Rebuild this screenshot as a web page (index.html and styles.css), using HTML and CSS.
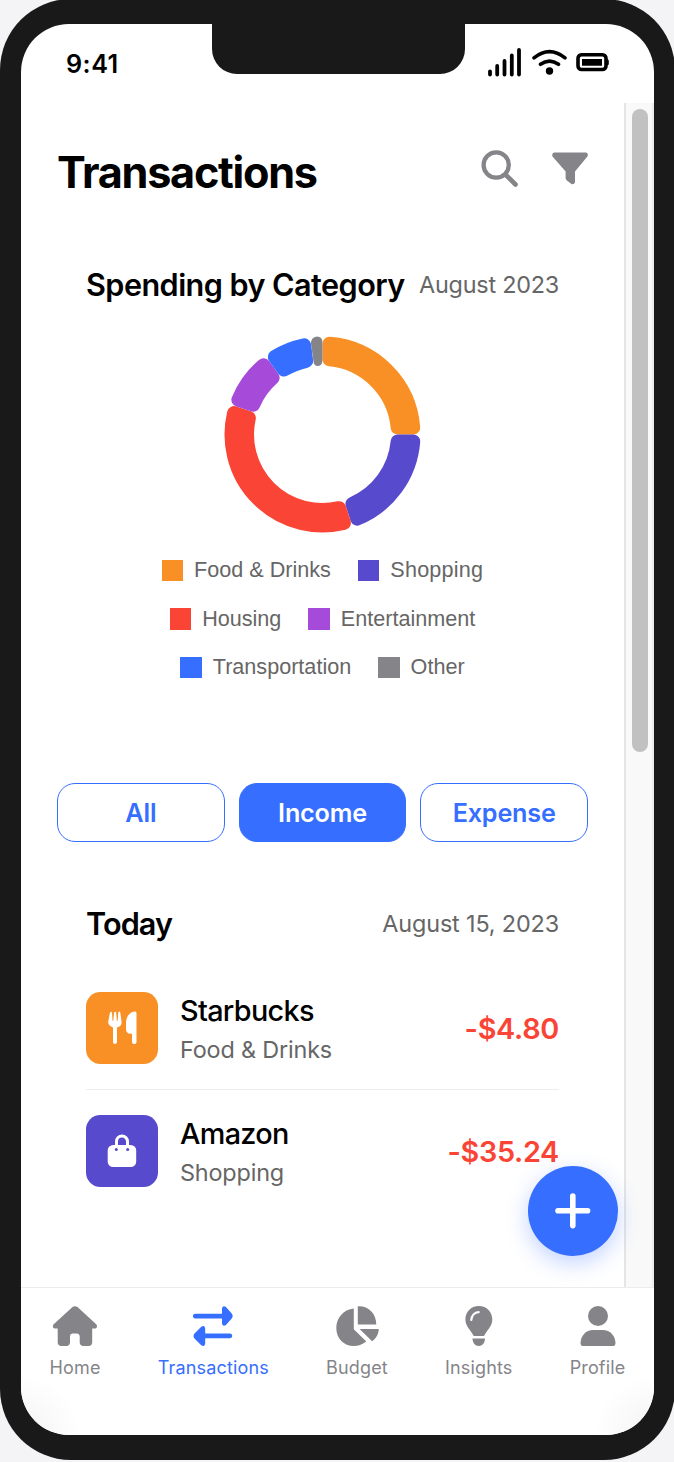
FILE: index.html
```html
<!DOCTYPE html>
<html lang="en">
<head>
<meta charset="utf-8">
<title>Transactions</title>
<link rel="stylesheet" href="styles.css">
</head>
<body>
<div class="phone">
  <div class="notch"></div>
  <div class="screen">
    <header class="status">
      <span class="clock">9:41</span>
      <svg class="status-icons" viewBox="486 46 126 34" fill="none" stroke="#000" stroke-linecap="round">
        <path d="M490 71.300v3.200M497.200 66v8.500M504.500 61v13.500M511.800 55.500v19M519 50v24.500" stroke-width="3.800"/>
        <path d="M534 57.800Q549.500 45.500 565 57.800M540.500 64.300Q549.500 58 558.500 64.300" stroke-width="3.600"/>
        <circle cx="549.500" cy="71" r="3.700" fill="#000" stroke="none"/>
        <rect x="578" y="54.700" width="28" height="14.800" rx="3.500" stroke-width="3.600"/>
        <path d="M582 59h20v6.800h-20z" fill="#000" stroke="none"/>
        <path d="M607.300 60.700v3" stroke-width="3"/>
      </svg>
    </header>
    <div class="viewport">
      <main class="content">
        <div class="page-head">
          <h1>Transactions</h1>
          <svg class="head-icons" viewBox="480 148 110 40" fill="#858489">
            <circle cx="496.200" cy="165" r="12.600" fill="none" stroke="#858489" stroke-width="4.300"/>
            <path d="M506 175l9.500 9.500" stroke="#858489" stroke-width="4.600" stroke-linecap="round"/>
            <path d="M554 152.500h32q2.600 1 1.600 3.800L575 171.500v11q-1.200 2.600-3.600 1.500l-4.800-3.700q-1-.8-1-2.300v-6.500L552.500 156.500q-1-2.800 1.500-4z"/>
          </svg>
        </div>
        <section class="chart-card">
          <div class="section-head"><h2 class="spending">Spending by Category</h2><span class="month">August 2023</span></div>
          <svg class="donut" viewBox="-98.500 -98.500 197 197" stroke-width="14" stroke-linejoin="round">
            <path fill="#f99026" stroke="#f99026" d="M7-90.730A91 91 0 0 1 90.730-7L75.170-7A75.500 75.500 0 0 0 7-75.170z"/>
            <path fill="#584acd" stroke="#584acd" d="M90.730 7A91 91 0 0 1 34.690 84.130L29.890 69.330A75.500 75.500 0 0 0 75.170 7z"/>
            <path fill="#fa4435" stroke="#fa4435" d="M21.380 88.450A91 91 0 0 1-88.450-21.380L-73.650-16.570A75.500 75.500 0 0 0 16.570 73.650z"/>
            <path fill="#a64ad9" stroke="#a64ad9" d="M-84.130-34.690A91 91 0 0 1-59.010-69.280L-49.860-56.690A75.500 75.500 0 0 0-69.330-29.890z"/>
            <path fill="#366eff" stroke="#366eff" d="M-47.690-77.520A91 91 0 0 1-18.310-89.130L-16.360-73.700A75.500 75.500 0 0 0-38.540-64.930z"/>
            <path fill="#858489" d="M-5.500-98Q0-97.800 0-92V-74Q-.500-68.500-5-68.500Q-8.500-68.700-9-73L-11.500-91Q-11.500-97.500-5.500-98z"/>
          </svg>
          <div class="legend">
            <div><span><i class="orange"></i><b>Food &amp; Drinks</b></span><span><i class="indigo"></i><b class="loose">Shopping</b></span></div>
            <div><span><i class="red"></i><b>Housing</b></span><span><i class="violet"></i><b>Entertainment</b></span></div>
            <div><span><i class="blue"></i><b>Transportation</b></span><span><i class="gray"></i><b>Other</b></span></div>
          </div>
        </section>
        <div class="filters">
          <button>All</button><button class="active">Income</button><button>Expense</button>
        </div>
        <section class="day">
          <div class="section-head"><h2 class="today">Today</h2><span class="date">August 15, 2023</span></div>
          <article class="item">
            <svg class="badge orange" viewBox="0 0 72 72">
              <path fill="#fff" d="M24 20.500q1.400-1.800 2 .2l.5 8h.8l.8-8.500q1.200-1 2 0l.8 8.500h.8l.6-8.500q1.200-1.500 2 .3l1.300 9.500c.2 2.600-1.500 4.600-4.600 5.500v14.500q-.3 2-2 2t-2-2V35.500c-3-.9-5-3-4.800-5.800zM50.500 21v29.500q-.5 1.600-2.200 1.600t-2.300-1.600V41.800h-1.200c-3.200 0-4.800-1.800-4.800-4.500v-6c0-6 3-10.800 8.200-11.700q2-.3 2.300 1.400z"/>
            </svg>
            <div class="names"><strong>Starbucks</strong><small>Food &amp; Drinks</small></div>
            <span class="amount">-$4.80</span>
          </article>
          <article class="item">
            <svg class="badge indigo" viewBox="0 0 72 72">
              <path d="M30.500 31v-4.500a5.500 5.500 0 0 1 11 0V31" fill="none" stroke="#fff" stroke-width="3"/>
              <rect x="21.700" y="30" width="28.500" height="22" rx="5.500" fill="#fff"/>
              <circle cx="30.300" cy="34.400" r="1.500" fill="#584acd"/><circle cx="41.700" cy="34.400" r="1.500" fill="#584acd"/>
            </svg>
            <div class="names"><strong>Amazon</strong><small>Shopping</small></div>
            <span class="amount">-$35.24</span>
          </article>
        </section>
      </main>
      <div class="track"><div class="thumb"></div></div>
      <div class="fab"><svg viewBox="0 0 90 90"><path d="M30 44.800h29.600M44.800 30v29.600" stroke="#fff" stroke-width="5.600" stroke-linecap="round"/></svg></div>
    </div>
    <nav class="tabs">
      <a><svg viewBox="52 1305 46 42"><path d="M72.500 1307q2.500-1.600 5 0l18.700 17.200c1.600 1.700.8 4.300-1.500 4.300h-2.500v14q-.3 3.200-3.500 3.500h-5.500q-3.200-.3-3.500-3.500v-6.500q-.2-2.500-2.700-2.500h-4.500q-2.500.2-2.500 2.500v6.500q-.3 3.200-3.500 3.500h-5.300q-3.200-.3-3.500-3.500v-14h-2.500c-2.300 0-3.100-2.600-1.500-4.300z"/></svg><span>Home</span></a>
      <a class="selected"><svg viewBox="190 1305 46 42"><path d="M195.300 1313.700H222v-4.500c0-3 2-4 4.200-2l5.500 6.300c1.300 1.700 1.300 3.200 0 4.900l-5.500 6.300c-2.200 2-4.200 1-4.200-2v-4.300h-26.700c-3.100 0-3.100-4.700 0-4.700zM229.900 1333.500h-24.700v-4.500c0-3-2-4-4.200-2l-6.500 6.500c-1.300 1.700-1.300 3.200 0 4.900l6.500 6.600c2.200 2 4.200 1 4.200-2v-4.700h24.700c3.100 0 3.100-4.800 0-4.800z"/></svg><span>Transactions</span></a>
      <a><svg viewBox="333.700 1305 46 42"><path d="M353.500 1308.500v20.800l12.500 12.200c-4.500 3.200-8 4.500-12.500 4.500-10 0-17.500-7.500-17.500-18 0-10 7-18.500 17.500-19.500zM357.500 1306.200c10.800-.5 18.500 7.300 18.500 18.300h-18.500zM359.300 1329H378.500c-.3 5-2.200 9-6.700 12.300z"/></svg><span>Budget</span></a>
      <a><svg viewBox="456 1305 46 42"><path d="M478.800 1306c8 0 13.500 6 13.500 13.400 0 7-5.500 10.600-8.300 16.600h-10.300c-2.700-6-8.300-9.600-8.300-16.600 0-7.400 5.400-13.400 13.400-13.400zM472.500 1338.500h12.500c0 4.500-2.700 7.500-6.200 7.500s-6.300-3-6.300-7.500z"/><path d="M471.300 1320c.3-4.500 3.200-7.600 7.400-7.900" fill="none" stroke="#fff" stroke-width="2.200" stroke-linecap="round"/></svg><span>Insights</span></a>
      <a><svg viewBox="574.500 1305 46 42"><circle cx="597.500" cy="1316" r="10"/><path d="M593 1330h9c8 0 13 6 13 13.700q-.2 2.300-2.400 2.300h-30.200q-2.200 0-2.400-2.300c0-7.700 5-13.700 13-13.700z"/></svg><span>Profile</span></a>
    </nav>
  </div>
</div>
</body>
</html>
```
FILE: styles.css
```css
* { box-sizing: border-box; }
body { margin: 0; width: 674px; height: 1462px; overflow: hidden; background: #f4f4f6; font-family: Inter, sans-serif; color: #000; }
h1, h2 { margin: 0; white-space: nowrap; }
svg { display: block; flex: none; }
.phone { position: relative; width: 675px; height: 1461px; margin-top: -1px; padding: 25px 21px 24px; border-radius: 71px; background: #191919; }
.screen { width: 633px; height: 1411px; border-radius: 48px; overflow: hidden; background: #fff; display: flex; flex-direction: column; }
.notch { position: absolute; left: 211.500px; top: 24px; width: 253px; height: 51px; border-radius: 0 0 25px 25px; background: #191919; }
.status { height: 79px; padding: 22px 42px 0 45px; display: flex; justify-content: space-between; flex: none; }
.clock { font-size: 25.200px; line-height: 37px; font-weight: 600; letter-spacing: .5px; }
.status-icons { width: 126px; height: 34px; }
.viewport { position: relative; height: 1184px; display: flex; flex: none; }
.content { width: 603px; padding: 0 36px; overflow: hidden; }
.page-head { height: 133px; padding-top: 45px; display: flex; justify-content: space-between; }
.head-icons { width: 110px; height: 40px; margin-right: -2px; }
h1 { font-size: 43.200px; line-height: 48px; font-weight: 700; letter-spacing: -1.280px; }
.section-head { display: flex; justify-content: space-between; align-items: center; height: 40px; white-space: nowrap; }
h2 { font-size: 30.600px; font-weight: 600; letter-spacing: -.550px; }
.today { letter-spacing: -.900px; }
.section-head span { font-size: 23.400px; color: #666; letter-spacing: -.150px; }
.section-head .month { letter-spacing: -.230px; }
.chart-card { height: 444px; padding: 28px 29px 0; }
.donut { width: 197px; height: 197px; margin: 31.500px auto 0; }
.legend { margin-top: 13.500px; color: #666; font: 21.600px/48.600px "Liberation Sans", sans-serif; }
.legend div { display: flex; justify-content: center; gap: 27px; height: 48.600px; }
.legend span { display: flex; align-items: center; gap: 10.800px; }
.legend b { font-weight: 400; white-space: nowrap; }
.legend .loose { letter-spacing: .220px; }
.legend i { width: 21.600px; height: 21.600px; }
.orange { background: #f99026; }
.indigo { background: #584acd; }
.red { background: #fa4435; }
.violet { background: #a64ad9; }
.blue { background: #366eff; }
.gray { background: #858489; }
.filters { display: grid; grid-template-columns: repeat(3, 1fr); gap: 14px; margin-top: 103px; height: 59px; }
.filters button { border: 1.500px solid #366eff; border-radius: 18px; background: #fff; color: #366eff; font: 600 25.200px Inter, sans-serif; letter-spacing: -.200px; padding: 0; }
.filters .active { background: #366eff; color: #fff; }
.day { padding: 61px 29px 0; }
.item { height: 123px; display: flex; align-items: center; }
.day .section-head { margin-bottom: 23px; }
.item + .item { border-top: 1px solid #ededed; }
.badge { width: 72px; height: 72px; border-radius: 14.400px; }
.names { display: flex; flex-direction: column; margin-left: 22px; padding-top: 4px; flex: 1; white-space: nowrap; }
.names strong { font-size: 28.800px; line-height: 39px; font-weight: 500; letter-spacing: -.680px; }
.names small { font-size: 23.400px; line-height: 39px; color: #666; letter-spacing: -.170px; }
.amount { font-size: 28.800px; line-height: 35px; font-weight: 600; color: #fa4435; letter-spacing: -.300px; }
.item:nth-of-type(1) .amount { padding-top: 2px; }
.track { width: 30px; padding: 6px 4px 0 6px; background: #f9f9f9; border-left: 2px solid #e5e5e5; border-right: 2px solid #ededed; }
.thumb { width: 16px; height: 643px; border-radius: 8px; background: #c1c1c1; }
.fab { position: absolute; left: 507px; top: 1063px; width: 90px; height: 90px; border-radius: 50%; background: #366eff; box-shadow: 0 7px 22px rgba(54,110,255,.3); }
.tabs { flex: 1; border-top: 1px solid #ededed; display: flex; justify-content: space-around; padding-top: 17px; color: #858489; fill: #858489; background: radial-gradient(circle at 0 100%, #f3f3f3, #fff 60px) left / 50% 100% no-repeat, radial-gradient(circle at 100% 100%, #f3f3f3, #fff 60px) right / 50% 100% no-repeat; }
.tabs a { display: flex; flex-direction: column; align-items: center; }
.tabs svg { width: 46px; height: 42px; }
.tabs span { font-size: 18px; line-height: 22px; margin-top: 10px; white-space: nowrap; letter-spacing: .150px; }
.tabs .selected { color: #366eff; fill: #366eff; }
```
